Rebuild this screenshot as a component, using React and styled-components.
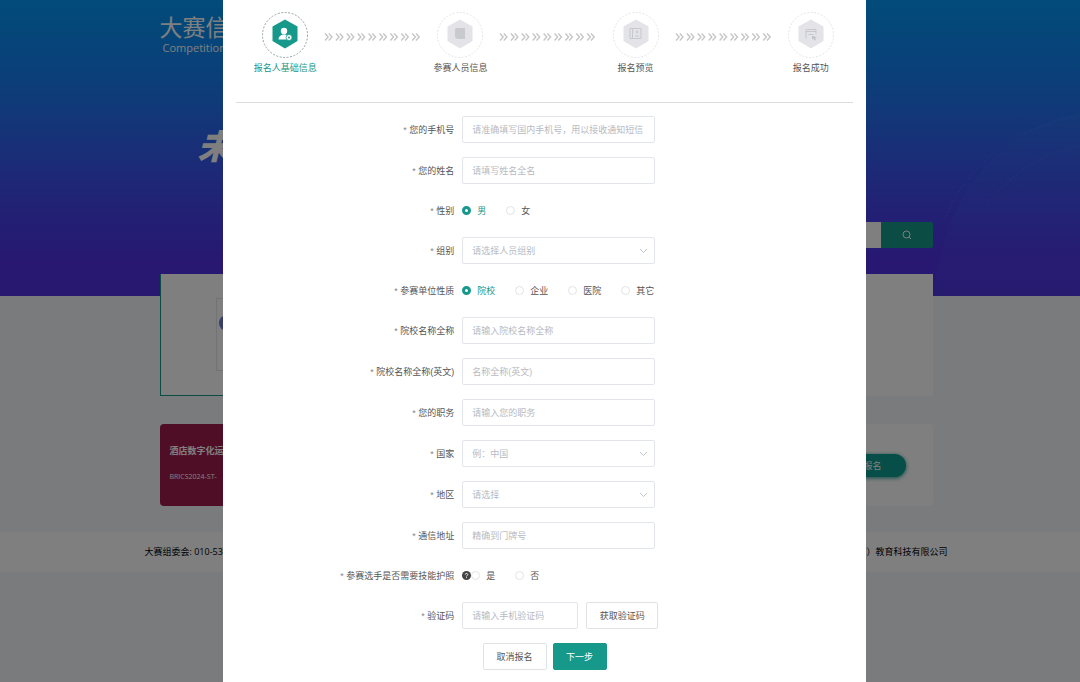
import React from "react";
import styled, { createGlobalStyle, css } from "styled-components";

const GlobalStyle = createGlobalStyle`
  *, *::before, *::after { box-sizing: border-box; }
  body {
    margin: 0;
    color: #555;
    font-family: "Liberation Sans", "Noto Sans CJK SC", sans-serif;
    font-size: 9px;
  }
  button, input, select { font: inherit; }
`;

const teal = "#16988b";

/* ---------- page behind the dialog ---------- */

const Page = styled.div`
  position: relative;
  min-height: 100vh;
  display: flex;
  flex-direction: column;
  background: #f4f7f9;
`;

const Hero = styled.header`
  height: 296px;
  padding-left: 12px;
  background: linear-gradient(180deg, #0498f4 0%, #1084f2 20%, #2076f2 34%, #325ef0 50%, #4246ea 68%, #5030e4 88%, #5030e0 100%);
`;

const Container = styled.div`
  width: 73%;
  max-width: 773px;
  margin: 0 auto;
`;

const SiteTitle = styled.div`
  padding-top: 14px;
  color: #fff;
  font-size: 23px;
  line-height: 28px;
`;

const SiteSubtitle = styled.div`
  padding-left: 3px;
  color: #fff;
  font-family: "Open Sans", sans-serif;
  font-size: 11px;
  line-height: 12px;
`;

const Slogan = styled.div`
  padding: 72px 0 0 38px;
  color: #fff;
  font-family: "Liberation Serif", "Noto Sans CJK SC", serif;
  font-size: 34px;
  font-style: italic;
  font-weight: 900;
  line-height: 44px;
`;

const Search = styled.div`
  display: flex;
  justify-content: flex-end;
  margin-top: 52px;
`;

const SearchInput = styled.input`
  width: 480px;
  height: 26px;
  border: 0;
  background: #fff;
`;

const SearchButton = styled.button`
  display: grid;
  place-items: center;
  width: 52px;
  height: 26px;
  padding: 0;
  border: 0;
  border-radius: 0 2px 2px 0;
  background: ${teal};
  color: #fff;
`;

const Content = styled.main`
  margin-top: -22px;
  padding-left: 12px;
`;

const LogoCard = styled.section`
  display: flex;
  height: 122px;
  padding: 24px 55px;
  background: #fff;
  border-left: 1px solid ${teal};
  border-bottom: 1px solid ${teal};
  border-image: linear-gradient(90deg, ${teal} 30%, #fff 30%) 1;
`;

const LogoTile = styled.div`
  display: flex;
  align-items: center;
  width: 140px;
  height: 73px;
  border: 1px solid #e4e6ec;
`;

const LogoDot = styled.span`
  width: 16px;
  height: 16px;
  border-radius: 50%;
  margin: -24px 0 0 2px;
  background: #6f7fd0;
`;

const EventCard = styled.section`
  display: flex;
  justify-content: space-between;
  align-items: center;
  height: 82px;
  margin-top: 28px;
  padding-right: 27px;
  border-radius: 4px;
  background: #fff;
`;

const EventName = styled.div`
  align-self: stretch;
  width: 200px;
  padding: 19px 10px;
  border-radius: 4px;
  background: #a01a4c;
  color: #fff;
`;

const EventTitle = styled.h2`
  margin: 0;
  font-size: 9px;
  font-weight: 700;
  line-height: 17px;
`;

const EventCode = styled.p`
  margin: 10px 0 0;
  font-family: "Open Sans", sans-serif;
  font-size: 7px;
  line-height: 14px;
`;

const JoinButton = styled.button`
  width: 78px;
  height: 23px;
  padding: 0 24px 0 0;
  border: 0;
  border-radius: 12px;
  background: #109c90;
  box-shadow: 0 1px 4px ${teal};
  color: #fff;
  text-align: right;
`;

const Footer = styled.footer`
  margin-top: 26px;
  padding-left: 12px;
  background: #fff;
  color: #000;
  font-family: "Open Sans", "Noto Sans CJK SC", sans-serif;
  line-height: 40px;
`;

const FooterInner = styled.div`
  display: flex;
  justify-content: space-between;
  width: 76%;
  max-width: 803px;
  margin: 0 auto;
`;

const Globe = styled.svg`
  position: absolute;
  top: 100px;
  right: 0;
  width: 146px;
  height: 196px;
`;

/* ---------- dialog ---------- */

const Mask = styled.div`
  position: absolute;
  inset: 0;
  display: flex;
  justify-content: center;
  padding-left: 9px;
  background: rgba(0, 0, 0, 0.5);
`;

const Dialog = styled.div`
  width: 60%;
  max-width: 644px;
  padding: 12px 13px;
  background: #fff;
`;

const Steps = styled.ol`
  display: flex;
  justify-content: space-between;
  margin: 0;
  padding: 0 3px 25px 10px;
  border-bottom: 1px solid #dcdcdc;
  list-style: none;
`;

const Step = styled.li`
  display: flex;
  flex-direction: column;
  align-items: center;
  width: 78px;
  color: ${(p) => (p.$active ? teal : "#555")};
  line-height: 17px;
  white-space: nowrap;

  svg { width: 46px; height: 46px; margin-bottom: 2px; }
`;

const StepArrows = styled.li`
  padding-top: 20px;
  svg { display: block; }
`;

const Form = styled.form`
  display: flex;
  flex-direction: column;
  gap: 14px;
  padding-top: 13px;
`;

const Row = styled.div`
  display: grid;
  grid-template-columns: 218px 1fr;
  column-gap: 8px;
  align-items: center;
  min-height: 25px;
`;

const labelStyle = css`
  color: #555;
  text-align: right;
  white-space: nowrap;
  &::before { content: "* "; color: #888; }
`;

const Label = styled.label`${labelStyle}`;
const GroupLabel = styled.span`${labelStyle}`;

const fieldStyle = css`
  width: ${(p) => p.$width || 193}px;
  height: 27px;
  padding: 0 9px;
  border: 1px solid #e2e6ea;
  border-radius: 2px;
  background: #fff;
  color: #555;
  outline: 0;
`;

const TextInput = styled.input`
  ${fieldStyle}
  &::placeholder { color: #b8bac0; opacity: 1; }
`;

const SelectWrap = styled.div`
  display: grid;
  width: 193px;
  align-items: center;
  > * { grid-area: 1 / 1; }
  svg { justify-self: end; margin-right: 7px; pointer-events: none; }
`;

const Select = styled.select`
  ${fieldStyle}
  appearance: none;
  color: #b8bac0;
`;

const Inline = styled.div`
  display: flex;
  align-items: center;
  gap: 8px;
`;

const RadioGroup = styled.div`
  display: flex;
  align-items: center;
  gap: 20px;
`;

const RadioLabel = styled.label`
  display: inline-flex;
  align-items: center;
  gap: 6px;
  color: #555;
  white-space: nowrap;
  &:has(input:checked) { color: ${teal}; }
`;

const Radio = styled.input`
  appearance: none;
  width: 9px;
  height: 9px;
  margin: 0;
  border: 1px solid #e0e3e6;
  border-radius: 50%;
  background: #fff;
  &:checked { border: 3px solid ${teal}; }
`;

const HelpIcon = styled.svg`
  flex: none;
  margin-right: -8px;
`;

const Button = styled.button`
  width: ${(p) => p.$width}px;
  height: 27px;
  padding: 0;
  border: 1px solid ${(p) => (p.$primary ? teal : "#e0e3e6")};
  border-radius: 2px;
  background: ${(p) => (p.$primary ? teal : "#fff")};
  color: ${(p) => (p.$primary ? "#fff" : "#555")};
`;

const Actions = styled.div`
  display: flex;
  justify-content: center;
  gap: 6px;
`;

const icons = {
  user: (
    <g fill="#fff">
      <circle cx="22" cy="19" r="3.2" />
      <path d="M16.5 27.5c0-3 2-4 4-5h3c1 .5 2 1 2.5 1.500v3.500z" />
      <circle cx="27" cy="25.500" r="3" stroke={teal} strokeWidth=".8" />
      <circle cx="27" cy="25.500" r="1" fill={teal} />
    </g>
  ),
  page: <path d="M19 16h9v11H20l-2-2v-8z" fill="#c9cace" />,
  preview: (
    <g fill="none" stroke="#c6c8ce" strokeWidth="1">
      <path d="M17 16.5h11v10H17zM19.5 16.5v10" />
      <circle cx="24" cy="20" r="1" />
      <path d="M22 24h4" />
    </g>
  ),
  done: (
    <g fill="none" stroke="#c6c8ce" strokeWidth="1">
      <path d="M18 26.5v-9h10v5M18 19.5h10M20.5 22.5h5" />
      <path d="M24 24l5 1-2 1 1 2-1.5.5-1-2-1.500 1z" fill="#bfc1c8" stroke="none" />
    </g>
  ),
};

function StepIcon({ name, active }) {
  return (
    <svg viewBox="0 0 46 46" aria-hidden="true">
      <circle
        cx="23"
        cy="23"
        r="22.5"
        fill="none"
        stroke={active ? "#8a9a98" : "#e2e2e6"}
        strokeDasharray="2 1.5"
        strokeWidth=".9"
      />
      <path d="M23 7.5l12.5 7v14.5L23 36.5l-12.5-7.500V14.5z" fill={active ? teal : "#e4e4e8"} />
      {icons[name]}
    </svg>
  );
}

function Arrows() {
  return (
    <StepArrows aria-hidden="true">
      <svg width="97" height="10" fill="none" stroke="#c4c4c6" strokeWidth="1.3">
        {Array.from({ length: 9 }, (_, i) => (
          <path key={i} d={`M${1 + i * 10.9} 1.5l3.2 3.500-3.200 3.500M${4.8 + i * 10.9} 1.500l3.200 3.500-3.200 3.500`} />
        ))}
      </svg>
    </StepArrows>
  );
}

function TextRow({ id, label, placeholder }) {
  return (
    <Row>
      <Label htmlFor={id}>{label}</Label>
      <TextInput id={id} placeholder={placeholder} />
    </Row>
  );
}

function SelectRow({ id, label, placeholder }) {
  return (
    <Row>
      <Label htmlFor={id}>{label}</Label>
      <SelectWrap>
        <Select id={id} defaultValue="">
          <option value="">{placeholder}</option>
        </Select>
        <svg width="9" height="6" fill="none" stroke="#c0c4cc" aria-hidden="true">
          <path d="M1 1l3.5 3.5L8 1" />
        </svg>
      </SelectWrap>
    </Row>
  );
}

function RadioRow({ name, label, options, checked, before }) {
  return (
    <Row role="radiogroup" aria-labelledby={`${name}-label`}>
      <GroupLabel id={`${name}-label`}>{label}</GroupLabel>
      <Inline>
        {before}
        <RadioGroup>
          {options.map((o) => (
            <RadioLabel key={o}>
              <Radio type="radio" name={name} value={o} defaultChecked={o === checked} />
              {o}
            </RadioLabel>
          ))}
        </RadioGroup>
      </Inline>
    </Row>
  );
}

const steps = [
  ["报名人基础信息", "user"],
  ["参赛人员信息", "page"],
  ["报名预览", "preview"],
  ["报名成功", "done"],
];

export default function App() {
  return (
    <Page>
      <GlobalStyle />
      <Hero>
        <Container>
          <SiteTitle>大赛信</SiteTitle>
          <SiteSubtitle>Competition</SiteSubtitle>
          <Slogan>未</Slogan>
          <Search>
            <SearchInput aria-label="搜索" />
            <SearchButton aria-label="搜索">
              <svg width="10" height="10" fill="none" stroke="currentColor" aria-hidden="true">
                <circle cx="4.5" cy="4.5" r="3.5" />
                <path d="M7 7l2 2" />
              </svg>
            </SearchButton>
          </Search>
        </Container>
      </Hero>
      <Globe viewBox="0 0 146 196" aria-hidden="true">
        <path d="M0 196C8 100 60 30 146 12V196z" fill="#4aa0f0" opacity=".07" />
        <path
          d="M10 120C30 70 80 25 146 16M50 110C70 80 100 55 146 46"
          fill="none"
          stroke="#6ab8f8"
          strokeDasharray="1 3"
          opacity=".35"
        />
      </Globe>
      <Content>
        <Container>
          <LogoCard>
            <LogoTile><LogoDot /></LogoTile>
          </LogoCard>
          <EventCard>
            <EventName>
              <EventTitle>酒店数字化运</EventTitle>
              <EventCode>BRICS2024-ST-</EventCode>
            </EventName>
            <JoinButton>报名</JoinButton>
          </EventCard>
        </Container>
      </Content>
      <Footer>
        <FooterInner>
          <span>大赛组委会: 010-530</span>
          <span>京）教育科技有限公司</span>
        </FooterInner>
      </Footer>

      <Mask>
        <Dialog role="dialog" aria-label="报名">
          <Steps>
            {steps.map(([text, icon], i) => (
              <React.Fragment key={text}>
                {i > 0 && <Arrows />}
                <Step $active={i === 0}>
                  <StepIcon name={icon} active={i === 0} />
                  {text}
                </Step>
              </React.Fragment>
            ))}
          </Steps>
          <Form onSubmit={(e) => e.preventDefault()}>
            <TextRow id="phone" label="您的手机号" placeholder="请准确填写国内手机号，用以接收通知短信" />
            <TextRow id="name" label="您的姓名" placeholder="请填写姓名全名" />
            <RadioRow name="gender" label="性别" options={["男", "女"]} checked="男" />
            <SelectRow id="group" label="组别" placeholder="请选择人员组别" />
            <RadioRow name="unit" label="参赛单位性质" options={["院校", "企业", "医院", "其它"]} checked="院校" />
            <TextRow id="school" label="院校名称全称" placeholder="请输入院校名称全称" />
            <TextRow id="school-en" label="院校名称全称(英文)" placeholder="名称全称(英文)" />
            <TextRow id="job" label="您的职务" placeholder="请输入您的职务" />
            <SelectRow id="country" label="国家" placeholder="例：中国" />
            <SelectRow id="region" label="地区" placeholder="请选择" />
            <TextRow id="address" label="通信地址" placeholder="精确到门牌号" />
            <RadioRow
              name="passport"
              label="参赛选手是否需要技能护照"
              options={["是", "否"]}
              before={
                <HelpIcon width="9" height="9" viewBox="0 0 9 9" aria-hidden="true">
                  <circle cx="4.5" cy="4.5" r="4.5" fill="#444" />
                  <path
                    d="M3.2 3.6c0-1.6 2.6-1.6 2.6 0 0 .9-1.300.8-1.300 1.900M4.5 6.300v.9"
                    fill="none"
                    stroke="#fff"
                    strokeWidth=".9"
                  />
                </HelpIcon>
              }
            />
            <Row>
              <Label htmlFor="code">验证码</Label>
              <Inline>
                <TextInput id="code" $width={116} placeholder="请输入手机验证码" />
                <Button type="button" $width={72}>获取验证码</Button>
              </Inline>
            </Row>
            <Actions>
              <Button type="button" $width={64}>取消报名</Button>
              <Button type="submit" $primary $width={54}>下一步</Button>
            </Actions>
          </Form>
        </Dialog>
      </Mask>
    </Page>
  );
}
